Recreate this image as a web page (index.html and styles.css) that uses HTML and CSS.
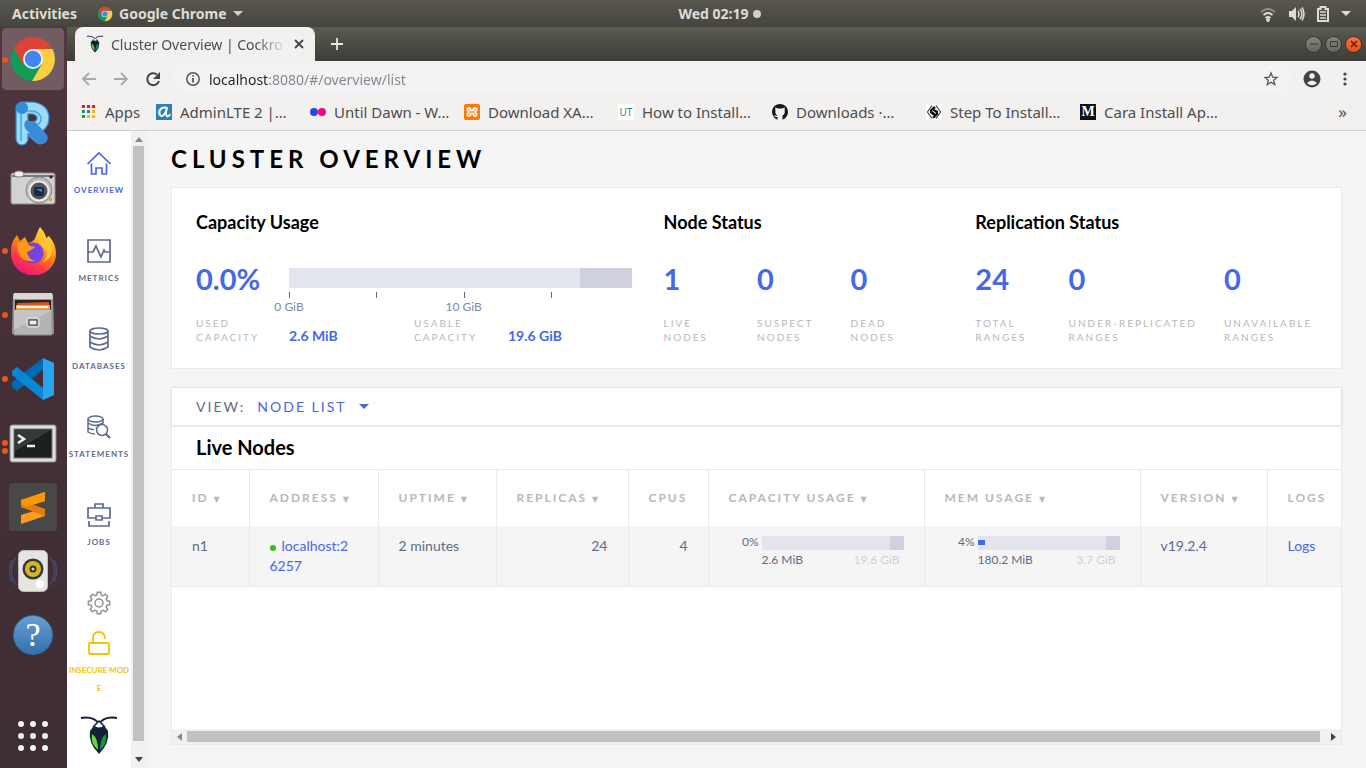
FILE: index.html
```html
<!DOCTYPE html>
<html lang="en">
<head>
<meta charset="utf-8">
<title>Cluster Overview | Cockroach Console</title>
<link rel="stylesheet" href="styles.css">
</head>
<body>
<svg class="defs" width="0" height="0" aria-hidden="true">
  <defs>
    <symbol id="chrome" viewBox="0 0 48 48">
      <circle cx="24" cy="24" r="22" fill="#0f9d58"/>
      <path d="M24 24V14h19.500A22 22 0 0 1 23 46L33 29z" fill="#ffcd40"/>
      <path d="M24 2a22 22 0 0 1 19.500 12H24L14 30 5 13A22 22 0 0 1 24 2z" fill="#db4437"/>
      <circle cx="24" cy="24" r="10" fill="#f1f1f1"/><circle cx="24" cy="24" r="8.200" fill="#4285f4"/>
    </symbol>
    <symbol id="roach" viewBox="0 0 38 40">
      <path d="M1 3Q14 1 19 9Q24 1 37 3" fill="none" stroke="#151f37" stroke-width="2"/>
      <path d="M13 12Q19 7 25 12L28 16Q30 28 19 39Q8 28 10 16z" fill="#151f37"/>
      <path d="M14 10.500L19 6l5 4.500q-5 4-10 0z" fill="#fff"/><path d="M13 12l6-6 6 6" fill="none" stroke="#151f37" stroke-width="1.500"/>
      <path d="M12 19Q18 23 18 35Q10 28 12 19z" fill="#6bd33b"/><path d="M26 19Q20 23 20 35Q28 28 26 19z" fill="#089949"/>
    </symbol>
  </defs>
</svg>
<div class="desktop">
  <header class="topbar">
    <div class="topbar-left">
      <button class="plain activities">Activities</button>
      <button class="plain app-menu"><svg width="16" height="16"><use href="#chrome"/></svg>Google Chrome<svg width="10" height="6"><path d="M0 0h10L5 5z" fill="#d2d0cb"/></svg></button>
    </div>
    <button class="plain clock">Wed 02:19<span class="clock-dot"></span></button>
    <div class="topbar-right">
      <svg width="16" height="16" fill="none" stroke="#dddbd6" stroke-width="1.800"><path d="M1 6q7-6 14 0" opacity=".45"/><path d="M3.500 9q4.500-4 9 0M5.500 12q2.500-2 5 0"/><circle cx="8" cy="14" r="1" fill="#dddbd6"/></svg>
      <svg width="17" height="16"><path d="M1 5h3l4-4v14l-4-4H1z" fill="#dddbd6"/><path d="M10 5q2 3 0 6M12 3q4 5 0 10M14 1.500q4 6.500 0 13" fill="none" stroke="#dddbd6" stroke-width="1.500"/></svg>
      <svg width="12" height="16"><path d="M1 3h2.500V1h5v2H11v12H1z" fill="none" stroke="#dddbd6" stroke-width="2"/><path d="M3 6h6M3 9h6M3 12h6" stroke="#dddbd6" stroke-width="1.500"/></svg>
      <svg width="10" height="6"><path d="M0 0h10L5 5z" fill="#dddbd6"/></svg>
    </div>
  </header>
  <div class="workspace">
    <nav class="dock" aria-label="Applications">
      <button class="dock-item active" aria-label="Google Chrome"><i class="run"></i><svg width="48" height="48"><use href="#chrome"/></svg></button>
      <button class="dock-item" aria-label="R"><svg width="48" height="48"><path d="M13 9v31M13 9h11q10 2 10 10t-10 11h-3l10 9" fill="none" stroke="#3b8fda" stroke-width="13" stroke-linecap="round" stroke-linejoin="round"/><path d="M13 9v31M13 9h11q10 2 10 10t-10 10h-6" fill="none" stroke="#9bdcf4" stroke-width="10.500" stroke-linecap="round"/><path d="M12 15v27M16 12h8q8 2 8 8t-8 7" fill="none" stroke="#4aa5df" stroke-width="1.500"/><path d="M21 26l12 13" stroke="#3a8bd6" stroke-width="11.500" stroke-linecap="round"/><circle cx="13" cy="9" r="6" fill="#348bd5"/><path d="M20 17h4q4 3 0 5h-4z" fill="#46313a"/></svg></button>
      <button class="dock-item" aria-label="Camera"><svg width="48" height="48"><rect x="2" y="10" width="44" height="31" rx="2" fill="#d2d2d0" stroke="#8b8b89"/><path d="M3 13h42" stroke="#777" stroke-width="2"/><ellipse cx="10" cy="11" rx="5" ry="3" fill="#eee" stroke="#888"/><circle cx="30" cy="27" r="13" fill="#bcbcbc" stroke="#888"/><circle cx="30" cy="28" r="9.500" fill="#555" stroke="#eee" stroke-width="2"/><rect x="25" y="24" width="10" height="9" rx="2" fill="#142c50"/><path d="M27 26h6v3z" fill="#4f83b7"/><circle cx="42" cy="14" r="1.500" fill="#222"/><rect x="40" y="35" width="3" height="3" fill="#e89b2d"/></svg></button>
      <button class="dock-item" aria-label="Firefox"><i class="run"></i><svg width="48" height="48"><defs><linearGradient id="ff" x1=".8" y1="0" x2=".3" y2="1"><stop stop-color="#fff44f"/><stop offset=".4" stop-color="#ff980e"/><stop offset=".75" stop-color="#ff3647"/><stop offset="1" stop-color="#e31587"/></linearGradient></defs><path d="M31 0q6 7 6 11l3-2q7 8 7 18a22 21 0 0 1-45 0Q1 16 8 8l3 6 5-4 3 6q6-1 8-7t4-9z" fill="url(#ff)"/><circle cx="24" cy="26" r="10.500" fill="#7542e5"/><path d="M8 16q8-3 13 3l5 1q-4 4-8 5 1 7 8 9-15 2-17-11z" fill="#ff9a17"/><path d="M31 3q-5 10 3 17t-1 16q11-5 10-15-3-9-6-10z" fill="#ffc431"/></svg></button>
      <button class="dock-item" aria-label="Files"><i class="run"></i><svg width="48" height="48"><path d="M4 3h40l1 40H3z" fill="#999"/><path d="M5 2h38l1 6H4z" fill="#d8d8d6"/><rect x="6" y="9" width="36" height="12" fill="#262322"/><path d="M8 12l32-1v8H8z" fill="#d9501e"/><path d="M7 14h34v6H7z" fill="#f1a546"/><path d="M8 16h31" stroke="#fff2d5" stroke-width="2"/><path d="M5 19h38v25H5z" fill="#b4b4b2" stroke="#8d8d8b"/><path d="M5 19h38L5 39z" fill="#c5c5c3"/><rect x="18" y="27" width="12" height="9" rx="2" fill="#aaa" stroke="#eee"/><rect x="20" y="29" width="8" height="5" fill="#eee" stroke="#333"/></svg></button>
      <button class="dock-item" aria-label="Visual Studio Code"><i class="run"></i><svg width="48" height="48"><path d="M34 3v12L8 36l-5-4v-5z" fill="#0069b2"/><path d="M3 16l5-4 26 21v12L3 20z" fill="#0788d4"/><path d="M34 3l11 5v32l-11 5z" fill="#28a5ee"/></svg></button>
      <button class="dock-item" aria-label="Terminal"><i class="run"></i><i class="run"></i><svg width="48" height="48"><rect x="1" y="6" width="46" height="37" rx="2" fill="#dedfdd" stroke="#8b8d89"/><rect x="5" y="10" width="38" height="29" fill="#1d2020" stroke="#777"/><path d="M6 11h36L6 32z" fill="#363939"/><path d="M9 16l6 4-6 4M18 27h8" fill="none" stroke="#eee" stroke-width="2.500"/></svg></button>
      <button class="dock-item" aria-label="Sublime Text"><svg width="48" height="48"><rect width="48" height="48" rx="3" fill="#484848"/><path d="M12 17l24-8v9l-13 4 13 4v7l-24 8v-9l13-4-13-4z" fill="#f99b25"/><path d="M12 17l24 9v7l-24-9z" fill="#e57b08"/><path d="M12 17l24-8v9l-18 5.500-6-2z" fill="#ff9800"/></svg></button>
      <button class="dock-item" aria-label="Sound"><svg width="48" height="48"><path d="M7 10q-9 13 0 28M3 13q-5 11 0 22M41 10q9 13 0 28M45 13q5 11 0 22" fill="none" stroke="#46496a" stroke-width="1.500"/><rect x="9.500" y="3.500" width="29" height="41" rx="5" fill="#e5e5e3" stroke="#bbb"/><circle cx="24" cy="22" r="10.500" fill="#383838"/><circle cx="24" cy="22" r="8" fill="#d6b51e"/><circle cx="24" cy="22" r="3.500" fill="#333"/><circle cx="24" cy="22" r="1.500" fill="#ccc"/><circle cx="31" cy="37" r="4" fill="#fff"/></svg></button>
      <button class="dock-item" aria-label="Help"><span class="help">?</span></button>
      <button class="dock-item apps-button" aria-label="Show applications"><svg width="32" height="32" fill="#f2f2f2"><circle cx="4" cy="4" r="3"/><circle cx="16" cy="4" r="3"/><circle cx="28" cy="4" r="3"/><circle cx="4" cy="16" r="3"/><circle cx="16" cy="16" r="3"/><circle cx="28" cy="16" r="3"/><circle cx="4" cy="28" r="3"/><circle cx="16" cy="28" r="3"/><circle cx="28" cy="28" r="3"/></svg></button>
    </nav>
    <div class="browser">
      <div class="tabstrip">
        <div class="tab"><svg width="18" height="18"><use href="#roach"/></svg><span class="tab-title">Cluster Overview | Cockro</span><button class="plain" aria-label="Close tab"><svg width="10" height="10"><path d="M1 1l8 8M9 1L1 9" stroke="#444" stroke-width="1.800"/></svg></button></div>
        <button class="plain new-tab" aria-label="New tab"><svg width="12" height="12"><path d="M6 0v12M0 6h12" stroke="#e8e8e5" stroke-width="1.800"/></svg></button>
        <div class="window-buttons">
          <button aria-label="Minimize"><svg width="10" height="10"><path d="M1 5h8" stroke="#393936"/></svg></button>
          <button aria-label="Maximize"><svg width="10" height="10"><path d="M1.500 2.500h7v5h-7z" fill="none" stroke="#393936"/></svg></button>
          <button class="close" aria-label="Close"><svg width="10" height="10"><path d="M2 2l6 6M8 2L2 8" stroke="#58200f" stroke-width="1.500"/></svg></button>
        </div>
      </div>
      <div class="toolbar">
        <button class="plain" aria-label="Back"><svg width="16" height="16"><path d="M15 8H2M8 2L2 8l6 6" fill="none" stroke="#aaa9a7" stroke-width="1.800"/></svg></button>
        <button class="plain" aria-label="Forward"><svg width="16" height="16"><path d="M1 8h13M8 2l6 6-6 6" fill="none" stroke="#aaa9a7" stroke-width="1.800"/></svg></button>
        <button class="plain" aria-label="Reload"><svg width="16" height="16"><path d="M14 10A6 6 0 1 1 12 3.500" fill="none" stroke="#444" stroke-width="2"/><path d="M15 1v7H8z" fill="#444"/></svg></button>
        <div class="omnibox">
          <svg width="16" height="16" fill="none" stroke="#555" stroke-width="1.500"><circle cx="8" cy="8" r="6.200"/><path d="M8 7v4.500M8 4v1.500" stroke-width="1.800"/></svg>
          <input class="url" aria-label="Address" value="localhost:8080/#/overview/list">
          <button class="plain" aria-label="Bookmark"><svg width="16" height="16"><path d="M8 2l1.700 4.200 4.300.300-3.300 2.800 1.100 4.200L8 11.200l-3.800 2.300 1.100-4.200L2 6.500l4.300-.3z" fill="none" stroke="#555" stroke-width="1.300"/></svg></button>
        </div>
        <button class="plain" aria-label="Profile"><svg width="18" height="18"><circle cx="9" cy="9" r="8.500" fill="#444"/><circle cx="9" cy="6" r="2.700" fill="#f2f1f0"/><path d="M4 13q5-5 10 0-5 4.500-10 0z" fill="#f2f1f0"/></svg></button>
        <button class="plain" aria-label="Menu"><svg width="16" height="16" fill="#444"><circle cx="8" cy="3" r="1.600"/><circle cx="8" cy="8" r="1.600"/><circle cx="8" cy="13" r="1.600"/></svg></button>
      </div>
      <div class="bookmarks">
        <a class="bookmark apps" href="#apps"><svg width="16" height="16"><path d="M1 1h3v3H1zM6 1h3v3H6zM11 1h3v3h-3z" fill="#ed1c24"/><path d="M1 6h3v3H1zM1 11h3v3H1z" fill="#0fa255"/><path d="M6 6h3v3H6z" fill="#3170dc"/><path d="M11 6h3v3h-3zM6 11h3v3H6zM11 11h3v3h-3z" fill="#fdb300"/></svg>Apps</a>
        <a class="bookmark" href="#adminlte"><svg width="16" height="16"><path d="M0 0h16v16H0z" fill="#2d80b5"/><path d="M11.500 4C4 2 2 8 4 11s6-1 7-7q-2 7 0 8t3-2" fill="none" stroke="#fff" stroke-width="2"/></svg>AdminLTE 2 |…</a>
        <a class="bookmark" href="#flickr"><svg width="16" height="16"><circle cx="4" cy="8" r="4" fill="#2c48e0"/><circle cx="12" cy="8" r="4" fill="#ff0084"/></svg>Until Dawn - W…</a>
        <a class="bookmark" href="#xampp"><svg width="16" height="16"><rect width="16" height="16" rx="2" fill="#fb7a0a"/><path d="M6.500 6.500V5Q6 3.500 4.500 4T3.500 6.500L5 8 3.500 9.500Q3 12 4.500 12T6.500 11V9.500h3V11q.5 1.500 2 1t1-2.500L11 8l1.500-1.500Q13 4 11.500 4T9.500 5v1.500z" fill="none" stroke="#fff" stroke-width="1.700"/></svg>Download XA…</a>
        <a class="bookmark" href="#ut"><span class="ut">UT</span>How to Install…</a>
        <a class="bookmark" href="#github"><svg width="16" height="16"><circle cx="8" cy="8" r="8" fill="#171719"/><path d="M5.500 16v-3q-3 .5-4-2 2 1 4.500.500-3-1-2.600-4L3.200 3.500 6 4.500h4l2.700-1v4q.3 3-2.200 4v4.500z" fill="#f2f1f0"/></svg>Downloads ·…</a>
        <a class="bookmark" href="#step"><svg width="16" height="16"><path d="M0 0h16v16H0z" fill="#fff"/><path d="M6 1.500L1.500 8 6 14.500M10 1.500L14.500 8 10 14.500" fill="none" stroke="#444" stroke-width="1.200"/><path d="M8 2L4 6v3l4 3-2 1 2 1.500 4-4V7L8 5l2-1z" fill="#111"/><path d="M6 6.500l4 3" stroke="#fff"/></svg>Step To Install…</a>
        <a class="bookmark" href="#medium"><span class="medium">M</span>Cara Install Ap…</a>
        <button class="plain more" aria-label="More bookmarks">»</button>
      </div>
      <div class="page">
        <nav class="sidebar" aria-label="Console">
          <a class="side-item current" href="#overview"><svg width="26" height="26" fill="none" stroke="currentColor" stroke-width="1.700"><path d="M1.500 14L13 3l11.500 11M5.500 13.500V24H10v-6h6v6h4.500V13.500"/></svg>OVERVIEW</a>
          <a class="side-item" href="#metrics"><svg width="26" height="26" fill="none" stroke="currentColor" stroke-width="1.700"><path d="M2 2h22v22H2zM2 14h5l3-6 5 11 3-7 1 2h5"/></svg>METRICS</a>
          <a class="side-item" href="#databases"><svg width="26" height="26" fill="none" stroke="currentColor" stroke-width="1.700"><ellipse cx="13" cy="5" rx="9" ry="3"/><path d="M4 5v16q9 6 18 0V5M4 10q9 6 18 0M4 16q9 6 18 0"/></svg>DATABASES</a>
          <a class="side-item" href="#statements"><svg width="26" height="26" fill="none" stroke="currentColor" stroke-width="1.500"><ellipse cx="9.500" cy="5" rx="7.500" ry="3"/><path d="M2 5v13q3 2 7 2M2 9q7 5 15 0V5M2 14q3 2 6 1.500"/><circle cx="16" cy="16" r="5.500"/><path d="M20 20l4 4" stroke-width="2.200"/></svg>STATEMENTS</a>
          <a class="side-item" href="#jobs"><svg width="26" height="26" fill="none" stroke="currentColor" stroke-width="1.700"><path d="M9 6V2h8v4M9.500 16H2V6h22v10h-7.500M10 14h6v4h-6zM3 19v5h20v-5"/></svg>JOBS</a>
          <div class="side-bottom">
            <a class="settings" href="#settings" aria-label="Settings"><svg width="24" height="24" fill="none" stroke="#8b8d91" stroke-width="1.400"><circle cx="12" cy="12" r="4"/><path d="M9.800 4l.5-2.700h3.400L14.200 4l2 .8 2.300-1.600 2.300 2.300L19.200 7.800l.8 2 2.700.5v3.400l-2.700.5-.8 2 1.600 2.300-2.300 2.300-2.300-1.600-2 .8-.5 2.700h-3.400L9.800 20l-2-.8-2.300 1.600-2.300-2.300 1.600-2.300-.8-2-2.700-.5v-3.400L4 9.800l.8-2-1.600-2.300 2.300-2.300 2.300 1.600z"/></svg></a>
            <a class="insecure" href="#security"><svg width="24" height="26" fill="none" stroke="currentColor" stroke-width="1.800"><rect x="2" y="13" width="20" height="11" rx="1"/><path d="M6 13V8q0-6 6-6t6 7"/></svg>INSECURE MODE</a>
            <svg width="38" height="40"><use href="#roach"/></svg>
          </div>
        </nav>
        <div class="vscroll" aria-hidden="true"><svg width="8" height="5"><path d="M0 5h8L4 0z" fill="#888"/></svg><span></span><svg width="8" height="5"><path d="M0 0h8L4 5z" fill="#444"/></svg></div>
        <main class="content">
          <h1>CLUSTER OVERVIEW</h1>
          <section class="card summary">
            <div class="group">
              <h2>Capacity Usage</h2>
              <div class="capacity">
                <span class="big">0.0%</span>
                <div class="chart">
                  <div class="bar"><span></span></div>
                  <div class="axis"><span><b>0 GiB</b></span><span></span><span><b>10 GiB</b></span><span></span></div>
                </div>
              </div>
              <div class="capacity-labels"><span class="label">USED<br>CAPACITY</span><strong>2.6 MiB</strong><span class="label">USABLE<br>CAPACITY</span><strong>19.6 GiB</strong></div>
            </div>
            <div class="group">
              <h2>Node Status</h2>
              <div class="stats nodes">
                <div><span class="big">1</span><span class="label">LIVE<br>NODES</span></div>
                <div><span class="big">0</span><span class="label">SUSPECT<br>NODES</span></div>
                <div><span class="big">0</span><span class="label">DEAD<br>NODES</span></div>
              </div>
            </div>
            <div class="group">
              <h2>Replication Status</h2>
              <div class="stats ranges">
                <div><span class="big">24</span><span class="label">TOTAL<br>RANGES</span></div>
                <div><span class="big">0</span><span class="label">UNDER-REPLICATED<br>RANGES</span></div>
                <div><span class="big">0</span><span class="label">UNAVAILABLE<br>RANGES</span></div>
              </div>
            </div>
          </section>
          <section class="card list">
            <div class="view"><label for="view">VIEW:</label><select id="view"><option>NODE LIST</option></select><svg width="10" height="5"><path d="M0 0h10L5 5z" fill="#4667e6"/></svg></div>
            <h2 class="live">Live Nodes</h2>
            <table>
              <colgroup><col class="c-id"><col class="c-address"><col class="c-uptime"><col class="c-replicas"><col class="c-cpus"><col class="c-usage"><col class="c-usage"><col class="c-version"><col></colgroup>
              <thead><tr><th>ID <i>▼</i></th><th>ADDRESS <i>▼</i></th><th>UPTIME <i>▼</i></th><th>REPLICAS <i>▼</i></th><th>CPUS</th><th>CAPACITY USAGE <i>▼</i></th><th>MEM USAGE <i>▼</i></th><th>VERSION <i>▼</i></th><th>LOGS</th></tr></thead>
              <tbody><tr>
                <td>n1</td><td class="address"><span class="dot"></span><a href="#node1">localhost:26257</a></td><td>2 minutes</td><td class="num">24</td><td class="num">4</td>
                <td><div class="meter"><span>0%</span><div><div class="track"><i></i></div><p><span>2.6 MiB</span><em>19.6 GiB</em></p></div></div></td>
                <td><div class="meter"><span>4%</span><div><div class="track"><b></b><i></i></div><p><span>180.2 MiB</span><em>3.7 GiB</em></p></div></div></td>
                <td>v19.2.4</td><td><a href="#logs">Logs</a></td>
              </tr></tbody>
            </table>
            <div class="hscroll" aria-hidden="true"><svg width="5" height="8"><path d="M5 0v8L0 4z" fill="#888"/></svg><span></span><svg width="5" height="8"><path d="M0 0v8l5-4z" fill="#444"/></svg></div>
          </section>
        </main>
      </div>
    </div>
  </div>
</div>
</body>
</html>
```
FILE: styles.css
```css
* { box-sizing: border-box; }
body { margin: 0; font-family: Lato, sans-serif; color: #5f6c87; }
svg { display: block; flex: none; }
a { color: #4667e6; text-decoration: none; }
h1, h2, p { margin: 0; }
.defs { position: absolute; }
.plain { border: 0; padding: 0; background: none; color: inherit; font: inherit; display: flex; align-items: center; }
.desktop { height: 100vh; display: flex; flex-direction: column; overflow: hidden; }
.workspace { flex: 1; min-height: 0; display: flex; }

/* System bar */
.topbar { height: 27px; flex: none; display: grid; grid-template-columns: 1fr auto 1fr; align-items: center; padding: 0 15px 0 12px; background: linear-gradient(#59574f, #45443e); color: #dfdcd6; font: bold 14px "Noto Sans", sans-serif; }
.topbar-left { display: flex; gap: 20px; }
.app-menu { gap: 6px; }
.clock { gap: 4px; margin-left: 76px; }
.clock-dot { width: 8px; height: 8px; border-radius: 50%; background: #d2d0cb; }
.topbar-right { display: flex; justify-content: flex-end; align-items: center; gap: 12px; }

/* Dock */
.dock { width: 67px; flex: none; padding-right: 1px; display: flex; flex-direction: column; background: linear-gradient(#50363d, #452f37 45%, #3d2e32); }
.dock-item { position: relative; height: 64px; flex: none; border: 0; padding: 0; background: none; display: flex; align-items: center; justify-content: center; }
.dock-item.active { background: #725b61; border: solid #50363d; border-width: 1px 2px; border-radius: 6px; }
.run { position: absolute; left: 2px; top: 29px; width: 6px; height: 6px; border-radius: 50%; background: #e95420; }
.active .run { left: 0; }
.run + .run { top: 37px; }
.help { width: 40px; height: 40px; border-radius: 50%; border: 1px solid #356da5; background: linear-gradient(#679fd2, #3470ae); color: #fff; font: 34px/38px "Liberation Serif", serif; }
.apps-button { margin-top: auto; }

/* Browser frame */
.browser { flex: 1; min-width: 0; display: flex; flex-direction: column; background: #f2f1f0; font-family: "Noto Sans", sans-serif; font-size: 14px; color: #4c4c4c; }
.tabstrip { height: 34px; flex: none; display: flex; align-items: center; padding: 0 4px 0 8px; background: linear-gradient(#5b5c4f, #3d3c37); }
.tab { width: 240px; height: 34px; padding: 0 11px; display: flex; align-items: center; gap: 7px; background: #f2f1f0; border-radius: 8px 8px 0 0; }
.tab-title { flex: 1; white-space: nowrap; mask-image: linear-gradient(90deg, #000 82%, transparent); }
.new-tab { margin-left: 16px; }
.window-buttons { margin-left: auto; display: flex; gap: 3px; }
.window-buttons button { width: 17px; height: 17px; padding: 0; border: 1px solid #333; border-radius: 50%; background: linear-gradient(#85857c, #66665f); display: grid; place-items: center; }
.window-buttons .close { background: linear-gradient(#ff743e, #ed4c13); }
.toolbar { height: 36px; flex: none; display: flex; align-items: center; gap: 16px; padding: 0 13px 0 14px; }
.omnibox { flex: 1; height: 28px; margin: 0 -4px 0 -4px; padding: 0 12px; border-radius: 14px; background: #f1f3f5; display: flex; align-items: center; gap: 8px; }
.url { flex: 1; min-width: 0; border: 0; padding: 0; outline: 0; font: 14px "Noto Sans", sans-serif; color: transparent; background: linear-gradient(90deg, #222 60px, #80868b 60px); background-clip: text; }
.bookmarks { height: 34px; flex: none; display: flex; align-items: center; padding: 0 19px 4px 14px; border-bottom: 1px solid #cfcfcf; font-size: 15px; }
.bookmark { width: 154px; flex: none; display: flex; align-items: center; gap: 8px; color: #4c4c4c; white-space: nowrap; }
.bookmark.apps { width: 75px; }
.ut, .medium { width: 16px; height: 16px; background: #fff; color: #05947a; text-align: center; font: 10px/16px "Noto Sans", sans-serif; }
.medium { background: #111; color: #fff; font: bold 14px/16px "Liberation Serif", serif; }
.more { margin-left: auto; font-size: 17px; }

/* Console sidebar */
.page { flex: 1; min-height: 0; display: flex; background: #f5f5f5; font-family: Lato, sans-serif; color: #5f6c87; }
.sidebar { width: 64px; flex: none; display: flex; flex-direction: column; background: #fff; }
.side-item { height: 88px; flex: none; padding-top: 19px; display: flex; flex-direction: column; align-items: center; gap: 8px; color: #5f6890; font-size: 8px; line-height: 12px; font-weight: bold; letter-spacing: 1px; }
.side-item.current { color: #4667e6; }
.side-bottom { margin-top: auto; padding-bottom: 13px; display: flex; flex-direction: column; align-items: center; }
.settings { margin-bottom: 15px; }
.insecure { width: 62px; margin-bottom: 18px; display: flex; flex-direction: column; align-items: center; gap: 5px; text-align: center; color: #f2c500; font-size: 8px; line-height: 18px; font-weight: bold; word-break: break-all; }
.vscroll { width: 16px; flex: none; padding: 6px 3px 6px 2px; display: flex; flex-direction: column; align-items: center; background: #f1f1f1; }
.vscroll span { width: 11px; flex: 1; margin: 4px 0 16px; background: #c1c1c1; }

/* Overview */
.content { flex: 1; min-width: 0; padding: 12px 24px 23px; display: flex; flex-direction: column; }
h1 { color: #000; font-size: 24px; line-height: 32px; letter-spacing: 5px; }
h2 { color: #000; font-size: 18px; line-height: 24px; }
.card { background: #fff; border: 1px solid #eaeaea; }
.summary { margin-top: 12px; display: grid; grid-template-columns: 6fr 4fr 5fr; padding: 22px 0 24px; }
.group { min-width: 0; padding-left: 24px; }
.big { display: block; color: #4667e6; font-size: 29px; line-height: 30px; font-weight: bold; }
.label { display: block; color: #b8b8b8; font-size: 10px; line-height: 14px; letter-spacing: 2px; white-space: nowrap; }
.capacity { margin-top: 30px; height: 52px; display: grid; grid-template-columns: 93px 1fr; }
.chart { padding: 4px 8px 0 0; }
.bar { height: 20px; display: flex; justify-content: flex-end; background: #e2e5ee; }
.bar span { width: 15%; background: #cfd1de; }
.axis { margin-top: 4px; display: grid; grid-template-columns: repeat(4, 25.5%); }
.axis span::before { content: ""; display: block; width: 1px; height: 6px; background: #5f6890; }
.axis b { width: 0; display: flex; justify-content: center; white-space: nowrap; font-size: 12px; line-height: 18px; font-weight: normal; color: #7e89a9; }
.capacity-labels { display: grid; grid-template-columns: 93px 125px 94px 1fr; align-items: end; }
.capacity-labels strong { color: #4667e6; font-size: 14px; line-height: 16px; }
.stats { margin-top: 30px; display: grid; }
.stats .big { margin-bottom: 22px; }
.nodes { grid-template-columns: 32.5% 32.5% 1fr; }
.ranges { grid-template-columns: 25.5% 42.5% 1fr; }
.list { flex: 1; min-height: 0; margin-top: 18px; display: flex; flex-direction: column; }
.view { height: 37px; flex: none; padding-left: 24px; display: flex; align-items: center; box-shadow: 0 1px 3px #d5d5d5; font-size: 14px; letter-spacing: 2px; }
.view select { appearance: none; border: 0; padding: 0; margin: 0 12px; background: none; color: #4667e6; font: 14px Lato, sans-serif; letter-spacing: 2px; }
.live { padding: 10px 24px; font-size: 20px; }

/* Node table */
table { width: 100%; table-layout: fixed; border-collapse: collapse; }
.c-id { width: 77px; } .c-address { width: 129px; } .c-uptime { width: 118px; } .c-replicas { width: 132px; } .c-cpus { width: 80px; } .c-usage { width: 216px; } .c-version { width: 127px; }
tr { border: solid #eaeaea; border-width: 1px 0; }
tbody tr { background: #f5f5f5; border-top: 0; }
thead tr { border-bottom: 0; }
th { height: 56px; padding: 0 0 0 20px; text-align: left; color: #b8b8b8; font-size: 12px; letter-spacing: 2px; white-space: nowrap; }
th i { font: 8px "DejaVu Sans", sans-serif; }
th + th, td + td { border-left: 1px solid #eaeaea; }
td { height: 60px; padding: 10px 20px; vertical-align: top; font-size: 14px; line-height: 20px; }
td.address { padding-right: 24px; word-break: break-all; }
.dot { display: inline-block; width: 6px; height: 6px; margin-right: 6px; border-radius: 50%; background: #44b51e; }
.num { text-align: right; }
.meter { display: grid; grid-template-columns: 33px 1fr; font-size: 12px; line-height: 12px; }
.meter > span { text-align: right; padding-right: 3px; }
.track { height: 14px; display: flex; align-items: center; background: #e2e5ee; }
.track i { width: 14px; height: 14px; margin-left: auto; background: #cfd1de; }
.track b { width: 7px; height: 5px; background: #4667e6; }
.meter p { padding: 4px 4px 0 0; display: flex; justify-content: space-between; }
.meter em { color: #cfd1de; font-style: normal; }
.hscroll { height: 15px; margin-top: auto; padding: 0 5px; display: flex; align-items: center; background: #f1f1f1; }
.hscroll span { flex: 1; height: 11px; margin: 0 11px 0 5px; background: #c1c1c1; }
```
